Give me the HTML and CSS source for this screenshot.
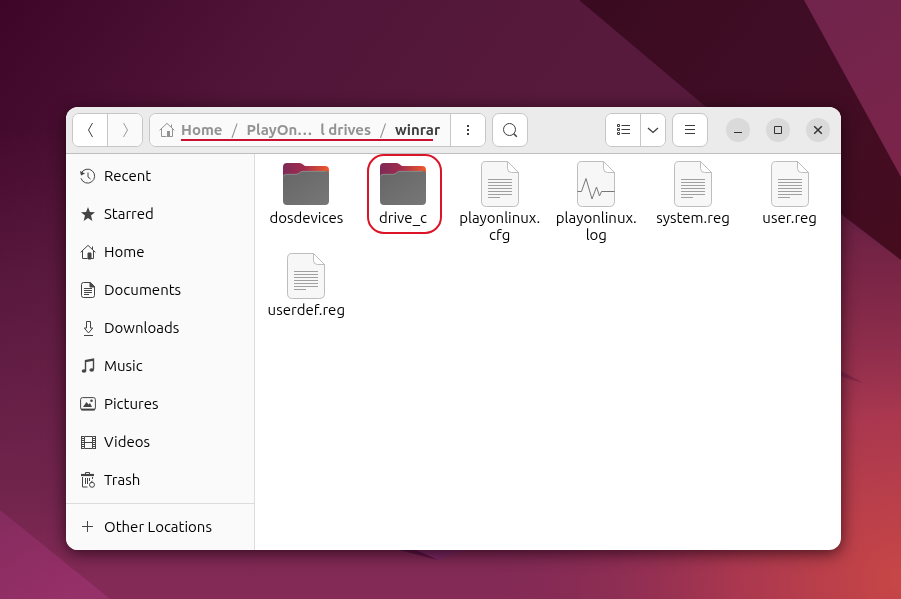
FILE: index.html
```html
<!DOCTYPE html>
<html lang="en">
<head>
<meta charset="utf-8">
<meta name="viewport" content="width=device-width, initial-scale=1">
<title>winrar</title>
<link rel="stylesheet" href="styles.css">
</head>
<body>
<svg class="wallpaper" viewBox="0 0 901 599" preserveAspectRatio="none" aria-hidden="true">
  <defs>
    <linearGradient id="base" x1="0" y1="0" x2="400" y2="300" gradientUnits="userSpaceOnUse"><stop offset="0" stop-color="#3f0529"/><stop offset=".5" stop-color="#501538"/><stop offset="1" stop-color="#571a3c"/></linearGradient>
    <linearGradient id="lower" x1="0" y1="130" x2="0" y2="580" gradientUnits="userSpaceOnUse"><stop offset="0" stop-color="#6a2048" stop-opacity="0"/><stop offset=".8" stop-color="#70244c"/><stop offset="1" stop-color="#832a56"/></linearGradient>
    <radialGradient id="glow" cx="901" cy="580" r="420" gradientUnits="userSpaceOnUse"><stop offset="0" stop-color="#c84646"/><stop offset=".4" stop-color="#a9374f"/><stop offset="1" stop-color="#852954" stop-opacity="0"/></radialGradient>
    <linearGradient id="facet" x1="800" y1="0" x2="901" y2="150" gradientUnits="userSpaceOnUse"><stop offset="0" stop-color="#70244c"/><stop offset="1" stop-color="#7a244a"/></linearGradient>
    <linearGradient id="dark" x1="600" y1="0" x2="901" y2="240" gradientUnits="userSpaceOnUse"><stop offset="0" stop-color="#3a0b20"/><stop offset=".5" stop-color="#400d26"/><stop offset="1" stop-color="#450c1e"/></linearGradient>
    <linearGradient id="side" x1="0" y1="210" x2="0" y2="420" gradientUnits="userSpaceOnUse"><stop offset="0" stop-color="#682044"/><stop offset=".3" stop-color="#7a2546"/><stop offset="1" stop-color="#a0344c" stop-opacity="0"/></linearGradient>
    <linearGradient id="corner" x1="0" y1="510" x2="60" y2="599" gradientUnits="userSpaceOnUse"><stop offset="0" stop-color="#852b5e"/><stop offset="1" stop-color="#963068"/></linearGradient>
  </defs>
  <path fill="url(#base)" d="M0 0h901v599H0z"/>
  <path fill="url(#lower)" d="M0 130h901v469H0z"/>
  <path fill="url(#glow)" d="M400 150h501v449H400z"/>
  <path fill="url(#side)" d="M700 130l201 130v160H700z"/>
  <path fill="url(#dark)" d="M579 0h322v260L841 214 706 107z"/>
  <path fill="url(#facet)" d="M804 0h97v177z"/>
  <path fill="url(#corner)" d="M0 510l110 89H0z"/>
  <path fill="#812548" d="M836 368l27 15-27-8z"/>
  <path fill="#5a1242" d="M380 545h26l32 15z"/>
  <path fill="#7a2862" d="M406 545h78l-46 15z"/>
</svg>

<svg class="symbols" aria-hidden="true">
  <defs>
    <linearGradient id="folder-back" x1="0" y1="0" x2="1" y2="0"><stop offset="0" stop-color="#7d2a58"/><stop offset=".45" stop-color="#a02c4c"/><stop offset="1" stop-color="#f05a2c"/></linearGradient>
    <linearGradient id="folder-front" x1="0" y1="0" x2="1" y2="1"><stop offset="0" stop-color="#666"/><stop offset="1" stop-color="#777"/></linearGradient>
  </defs>
  <symbol id="home" viewBox="0 0 16 16"><path d="M.6 8.300L8 1.400l7.400 6.900M2.500 7v7.500h5M13.500 7v7.500h-3M12.500 2.500v3" fill="none" stroke="currentColor"/><path d="M8 9h3v6H8z" fill="currentColor"/></symbol>
  <symbol id="folder" viewBox="0 0 48 48"><path fill="url(#folder-back)" d="M1 38V7q0-4 4-4h12.500q2 0 3.500 1.500T24 6h19q4 0 4 4v28z"/><path fill="url(#folder-front)" d="M1 17q0-3 3-3h10q2 0 3.500-1.500T21 11h23q3 0 3 3v27q0 4-4 4H5q-4 0-4-4z"/><path d="M1.500 16.500q.5-2.200 3-2.200H14q2 0 3.500-1.500t3.500-1.500h23" fill="none" stroke="#999" stroke-width=".7"/></symbol>
  <symbol id="sheet" viewBox="0 0 48 48"><path d="M9.500 1.500h22l11 11v29q0 5-5 5h-27q-5 0-5-5v-35q0-5 4-5z" fill="#f7f7f7" stroke="#bdbdbd"/><path d="M31.500 1.500v7q0 4 4 4h7z" fill="#fff" stroke="#bdbdbd"/></symbol>
  <symbol id="document" viewBox="0 0 48 48"><use href="#sheet"/><path d="M12 19.500h24M12 22.500h24M12 25.500h24M12 28.500h24M12 31.500h24M12 34.500h24M12 37.500h12" stroke="#a0a0a0"/></symbol>
  <symbol id="log" viewBox="0 0 48 48"><use href="#sheet"/><path d="M5.500 31.500h4L14 18.500 20 39l4.500-12 3 9 2-4.500h13" fill="none" stroke="#777"/></symbol>
</svg>

<main class="window">
  <header class="toolbar">
    <div class="group">
      <button class="tool" aria-label="Back"><svg class="icon" viewBox="0 0 16 16"><path d="M10.500 1L6.500 8l4 7"/></svg></button>
      <button class="tool faint" aria-label="Forward" disabled><svg class="icon" viewBox="0 0 16 16"><path d="M6.500 1l4 7-4 7"/></svg></button>
    </div>
    <div class="group">
      <nav class="crumbs" aria-label="Path">
        <svg class="crumb-icon"><use href="#home"/></svg>
        <div class="trail">
          <a href="#">Home</a><span class="slash">/</span><a href="#" class="pair"><span>PlayOn…</span><span>l drives</span></a><span class="slash">/</span><a href="#" class="current">winrar</a>
          <span class="underline"></span>
        </div>
      </nav>
      <button class="tool" aria-label="Folder menu"><svg class="icon fill" viewBox="0 0 16 16"><path d="M7 3h2v2H7zM7 7h2v2H7zM7 11h2v2H7z"/></svg></button>
    </div>
    <button class="tool single" aria-label="Search"><svg class="icon" viewBox="0 0 16 16"><circle cx="7.500" cy="7.500" r="6"/><path d="M11.800 11.800l3 3" stroke-width="1.500"/></svg></button>
    <div class="group end">
      <button class="tool" aria-label="List view"><svg class="icon" viewBox="0 0 16 16"><path d="M2.500 2.500h2v2h-2zM2.500 6.500h2v2h-2zM2.500 10.500h2v2h-2zM6.500 3.500H15M6.500 7.500H15M6.500 11.500H15"/></svg></button>
      <button class="tool narrow" aria-label="View options"><svg class="icon" viewBox="0 0 16 16"><path d="M3 6l5 4.500L13 6" stroke-width="1.300"/></svg></button>
    </div>
    <button class="tool single" aria-label="Main menu"><svg class="icon" viewBox="0 0 16 16"><path d="M3 3.500h10M3 7.500h10M3 11.500h10"/></svg></button>
    <div class="controls">
      <button class="round" aria-label="Minimize"><svg class="icon" viewBox="0 0 16 16"><path d="M4 10.500h8"/></svg></button>
      <button class="round" aria-label="Maximize"><svg class="icon" viewBox="0 0 16 16"><path d="M4.500 4.500h7v7h-7z"/></svg></button>
      <button class="round" aria-label="Close"><svg class="icon" viewBox="0 0 16 16"><path d="M4.200 4.200l7.600 7.600M11.800 4.200l-7.600 7.600" stroke-width="1.500"/></svg></button>
    </div>
  </header>
  <div class="content">
    <nav class="sidebar" aria-label="Places">
      <div class="places">
        <a href="#" class="place"><svg class="icon" viewBox="0 0 16 16"><path d="M1.200 5.400A7 7 0 1 1 1 10.300M8 4.500V9l2.500 2"/><path d="M0 3l1 4.500 4-2z" fill="currentColor" stroke="none"/></svg>Recent</a>
        <a href="#" class="place"><svg class="icon fill" viewBox="0 0 16 16"><path d="M8 1l1.900 4.900 5.100.3-4 3.300L12.400 15 8 12l-4.400 3L5 9.500 1 6.200l5.100-.3z"/></svg>Starred</a>
        <a href="#" class="place"><svg class="icon"><use href="#home"/></svg>Home</a>
        <a href="#" class="place"><svg class="icon" viewBox="0 0 16 16"><path d="M3.500.5h7l4 4v9q0 2-2 2h-9q-2 0-2-2v-11q0-2 2-2zM4 6.500h8M4 8.500h8M4 10.500h8M4 12.500h5"/><path d="M10 .5V5h4.500z" fill="currentColor"/></svg>Documents</a>
        <a href="#" class="place"><svg class="icon" viewBox="0 0 16 16"><path d="M6.500 1.500h4V8h2.200L8.500 13 4.300 8h2.200zM4 15.500h9"/></svg>Downloads</a>
        <a href="#" class="place"><svg class="icon" viewBox="0 0 16 16"><path d="M5.500 13V2.500l8-1.500v10.500M5.500 3.500l8-1.500" stroke-width="1.400"/><g fill="currentColor" stroke="none"><ellipse cx="4" cy="13" rx="2.300" ry="1.800"/><ellipse cx="11.700" cy="12" rx="2.300" ry="1.800"/></g></svg>Music</a>
        <a href="#" class="place"><svg class="icon" viewBox="0 0 16 16"><rect x=".6" y="1.600" width="14.800" height="12.300" rx="2"/><path d="M1 13.500h14" stroke-width="1.800"/><g fill="currentColor" stroke="none"><path d="M3 11l3.500-5 2 2.500L10 7l2 4z"/><circle cx="11.500" cy="4.800" r="1.300"/></g></svg>Pictures</a>
        <a href="#" class="place"><svg class="icon" viewBox="0 0 16 16"><path d="M1.500 2v13M15.500 2v13M4.500 2.500v12M12.500 2.500v12M4.500 2.500h8M4.500 8.500h8M4.500 14.500h8"/><path d="M3 2v13M14 2v13" stroke-width="2" stroke-dasharray="1 1"/></svg>Videos</a>
        <a href="#" class="place"><svg class="icon" viewBox="0 0 16 16"><path d="M5.500 2V.5h4V2M2.500 5v10h5M5.500 6v6M7.500 6v6M9.500 6v3M12.500 5v2"/><path d="M1 3h13" stroke-width="2.200"/><circle cx="12" cy="12.800" r="2.500"/><path d="M10.500 10.500l2-1.500"/></svg>Trash</a>
      </div>
      <div class="places other">
        <a href="#" class="place"><svg class="icon" viewBox="0 0 16 16"><path d="M7.500 2v11M2 7.500h11"/></svg>Other Locations</a>
      </div>
    </nav>
    <section class="files" aria-label="Files">
      <a href="#" class="file"><svg class="thumb"><use href="#folder"/></svg>dosdevices</a>
      <a href="#" class="file"><svg class="thumb"><use href="#folder"/></svg>drive_c<span class="marker"></span></a>
      <a href="#" class="file"><svg class="thumb"><use href="#document"/></svg>playonlinux.<wbr>cfg</a>
      <a href="#" class="file"><svg class="thumb"><use href="#log"/></svg>playonlinux.<wbr>log</a>
      <a href="#" class="file"><svg class="thumb"><use href="#document"/></svg>system.reg</a>
      <a href="#" class="file"><svg class="thumb"><use href="#document"/></svg>user.reg</a>
      <a href="#" class="file"><svg class="thumb"><use href="#document"/></svg>userdef.reg</a>
    </section>
  </div>
</main>
</body>
</html>
```
FILE: styles.css
```css
* {
  box-sizing: border-box;
}

body {
  margin: 0;
  min-height: 100vh;
  display: flex;
  padding: 107px 60px 49px 66px;
  font: 15px/16px Ubuntu, "Noto Sans", sans-serif;
  color: #000;
  background: #501538;
}

a {
  color: inherit;
  text-decoration: none;
}

.wallpaper {
  position: fixed;
  inset: 0;
  width: 100%;
  height: 100%;
  z-index: -1;
}

.symbols {
  position: absolute;
  width: 0;
  height: 0;
}

.window {
  flex: 1;
  display: flex;
  flex-direction: column;
  min-width: 0;
  border-radius: 12px;
  overflow: hidden;
  background: #fff;
  box-shadow: 0 3px 16px rgba(20, 0, 10, 0.7);
}

.toolbar {
  display: flex;
  align-items: center;
  gap: 6px;
  padding: 6px 11px 6px 6px;
  background: #ebebeb;
  border-bottom: 1px solid #bfbfbf;
}

.group {
  display: flex;
  border: 1px solid #c6c6c6;
  border-radius: 7px;
  overflow: hidden;
  background: #fff;
}

.end {
  margin-left: auto;
}

.tool {
  box-sizing: content-box;
  width: 34px;
  height: 32px;
  display: flex;
  align-items: center;
  justify-content: center;
  padding: 0;
  border: 0;
  background: #fff;
  color: #3d3d3d;
}

.tool + .tool,
.crumbs + .tool {
  border-left: 1px solid #c6c6c6;
}

.narrow {
  width: 24px;
}

.single {
  border: 1px solid #c6c6c6;
  border-radius: 7px;
}

.faint {
  color: #999;
  background: #fafafa;
}

.icon {
  flex: none;
  width: 16px;
  height: 16px;
  fill: none;
  stroke: currentColor;
}

.fill {
  fill: currentColor;
  stroke: none;
}

.crumbs {
  display: flex;
  align-items: center;
  gap: 6px;
  padding: 0 10px 0 9px;
  background: #fafafa;
  color: #929292;
  font-weight: 700;
}

.crumb-icon {
  width: 16px;
  height: 16px;
}

.trail {
  position: relative;
  display: flex;
  white-space: nowrap;
}

.slash {
  width: 24px;
  text-align: center;
  font-weight: 400;
}

.pair {
  display: flex;
  gap: 8px;
}

.current {
  color: #3d3d3d;
}

.underline {
  position: absolute;
  left: 0;
  right: 7px;
  bottom: -3px;
  height: 2px;
  background: #c8102e;
}

.controls {
  display: flex;
  gap: 16px;
  margin-left: 12px;
}

.round {
  width: 24px;
  height: 24px;
  display: flex;
  align-items: center;
  justify-content: center;
  padding: 0;
  border: 0;
  border-radius: 50%;
  background: #dadada;
  color: #333;
}

.content {
  flex: 1;
  display: flex;
}

.sidebar {
  flex: none;
  width: 189px;
  background: #fafafa;
  border-right: 1px solid #dcdcdc;
}

.places {
  padding: 3px 0 4px;
}

.other {
  padding: 4px 0;
  border-top: 1px solid #dcdcdc;
}

.place {
  display: flex;
  align-items: center;
  gap: 8px;
  height: 38px;
  padding: 0 14px;
}

.place .icon {
  color: #454545;
}

.files {
  flex: 1;
  display: grid;
  grid-template-columns: repeat(auto-fill, minmax(96px, 1fr));
  align-content: start;
  gap: 8px 0;
  padding: 6px 3px;
}

.file {
  position: relative;
  display: flow-root;
  min-height: 84px;
  padding: 0 6px;
  line-height: 17px;
  text-align: center;
}

.thumb {
  display: block;
  width: 48px;
  height: 48px;
  margin: 0 auto 1px;
}

.marker {
  position: absolute;
  inset: -6px 9px 10px 12px;
  border: 2px solid #dc1428;
  border-radius: 17px;
}
```
